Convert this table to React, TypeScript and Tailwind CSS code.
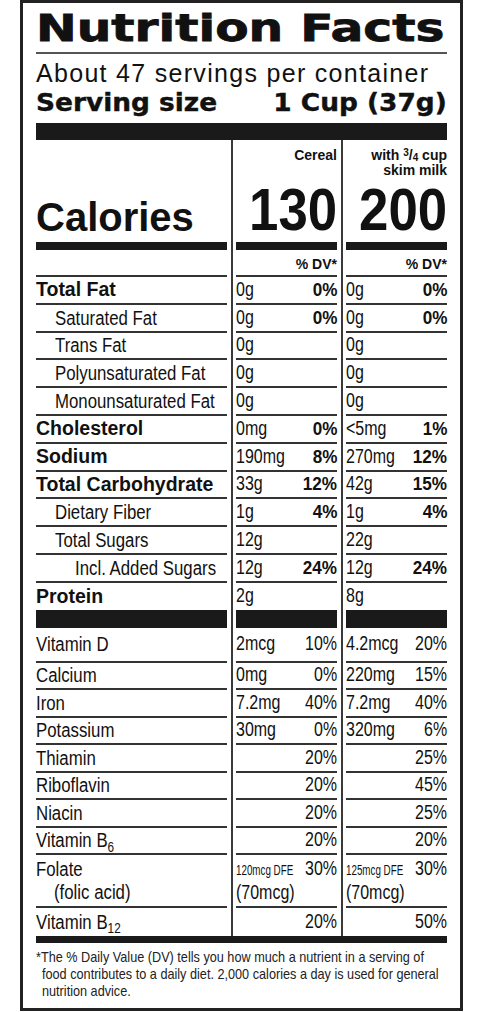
import React, { ReactNode } from "react";

const SANS = "font-['Liberation_Sans',Arial,sans-serif]";
const HEAVY = "font-['DejaVu_Sans','Liberation_Sans',sans-serif]";

function Nx({ children, right, cls }: { children: ReactNode; right?: boolean; cls: string }) {
  return (
    <span
      className={`inline-block whitespace-nowrap ${SANS} ${right ? "origin-right" : "origin-left"} ${cls}`}
    >
      {children}
    </span>
  );
}

function Cols({ h, a, b, c }: { h: string; a?: ReactNode; b?: ReactNode; c?: ReactNode }) {
  return (
    <div className={`flex ${h}`}>
      <div className="w-[195px] pr-[4px] h-full">{a}</div>
      <div className="w-[110px] border-l-2 border-[#3a3a3a] pl-[3px] pr-[4px] h-full">{b}</div>
      <div className="w-[106px] border-l-2 border-[#3a3a3a] pl-[3px] h-full">{c}</div>
    </div>
  );
}

type R = {
  label: ReactNode;
  lvl: 0 | 1 | 2;
  bold?: boolean;
  v1?: ReactNode;
  p1?: string;
  v2?: ReactNode;
  p2?: string;
  h: string;
  last?: boolean;
  pb?: boolean;
};

function NRow({ r }: { r: R }) {
  const line = r.last ? "h-full flex items-center" : "h-full border-b-2 border-[#333] flex items-center";
  const pad = r.lvl === 0 ? "" : r.lvl === 1 ? "pl-[19px]" : "pl-[39px]";
  const cell = (v?: ReactNode, p?: string) => (
    <div className={line}>
      <div className="w-[56px] shrink-0">
        <Nx cls="text-[19.5px] leading-none scale-x-[0.82]">{v}</Nx>
      </div>
      <div className="ml-auto">
        {r.pb ? (
          <Nx right cls="font-bold text-[19px] leading-none scale-x-[0.9]">{p}</Nx>
        ) : (
          <Nx right cls="text-[19.5px] leading-none scale-x-[0.82]">{p}</Nx>
        )}
      </div>
    </div>
  );
  return (
    <Cols
      h={r.h}
      a={
        <div className={`${line} ${pad}`}>
          {r.bold ? (
            <Nx cls="font-bold text-[19.5px] leading-none">{r.label}</Nx>
          ) : (
            <Nx cls="text-[20px] leading-none scale-x-[0.84]">{r.label}</Nx>
          )}
        </div>
      }
      b={cell(r.v1, r.p1)}
      c={cell(r.v2, r.p2)}
    />
  );
}

const Sub = ({ children }: { children: ReactNode }) => (
  <sub className="text-[14px] bottom-[-0.3em]">{children}</sub>
);

const top: R[] = [
  { label: "Total Fat", lvl: 0, bold: true, v1: "0g", p1: "0%", v2: "0g", p2: "0%", h: "h-[27.8px]", pb: true },
  { label: "Saturated Fat", lvl: 1, v1: "0g", p1: "0%", v2: "0g", p2: "0%", h: "h-[27.8px]", pb: true },
  { label: "Trans Fat", lvl: 1, v1: "0g", v2: "0g", h: "h-[27.8px]", pb: true },
  { label: "Polyunsaturated Fat", lvl: 1, v1: "0g", v2: "0g", h: "h-[27.8px]", pb: true },
  { label: "Monounsaturated Fat", lvl: 1, v1: "0g", v2: "0g", h: "h-[27.8px]", pb: true },
  { label: "Cholesterol", lvl: 0, bold: true, v1: "0mg", p1: "0%", v2: "<5mg", p2: "1%", h: "h-[27.8px]", pb: true },
  { label: "Sodium", lvl: 0, bold: true, v1: "190mg", p1: "8%", v2: "270mg", p2: "12%", h: "h-[27.8px]", pb: true },
  { label: "Total Carbohydrate", lvl: 0, bold: true, v1: "33g", p1: "12%", v2: "42g", p2: "15%", h: "h-[27.8px]", pb: true },
  { label: "Dietary Fiber", lvl: 1, v1: "1g", p1: "4%", v2: "1g", p2: "4%", h: "h-[27.8px]", pb: true },
  { label: "Total Sugars", lvl: 1, v1: "12g", v2: "22g", h: "h-[27.8px]", pb: true },
  { label: "Incl. Added Sugars", lvl: 2, v1: "12g", p1: "24%", v2: "12g", p2: "24%", h: "h-[27.8px]", pb: true },
  { label: "Protein", lvl: 0, bold: true, v1: "2g", v2: "8g", h: "h-[27.2px]", last: true, pb: true },
];

const vit: R[] = [
  { label: "Vitamin D", lvl: 0, v1: "2mcg", p1: "10%", v2: "4.2mcg", p2: "20%", h: "h-[34.7px]" },
  { label: "Calcium", lvl: 0, v1: "0mg", p1: "0%", v2: "220mg", p2: "15%", h: "h-[27.5px]" },
  { label: "Iron", lvl: 0, v1: "7.2mg", p1: "40%", v2: "7.2mg", p2: "40%", h: "h-[27.5px]" },
  { label: "Potassium", lvl: 0, v1: "30mg", p1: "0%", v2: "320mg", p2: "6%", h: "h-[27.5px]" },
  { label: "Thiamin", lvl: 0, p1: "20%", p2: "25%", h: "h-[27.5px]" },
  { label: "Riboflavin", lvl: 0, p1: "20%", p2: "45%", h: "h-[27.5px]" },
  { label: "Niacin", lvl: 0, p1: "20%", p2: "25%", h: "h-[27.5px]" },
  { label: <>Vitamin B<Sub>6</Sub></>, lvl: 0, p1: "20%", p2: "20%", h: "h-[27.5px]" },
];

const Bar = ({ h }: { h: string }) => <div className={`w-full ${h} bg-[#1a1a1a]`} />;

function FolateCell({ amt }: { amt: string }) {
  return (
    <div className="h-full border-b-2 border-[#333] flex flex-col justify-center">
      <div className="flex items-center h-[24px]">
        <div className="w-[56px] shrink-0">
          <Nx cls="text-[14px] leading-none scale-x-[0.7]">{amt}</Nx>
        </div>
        <div className="ml-auto">
          <Nx right cls="text-[19.5px] leading-none scale-x-[0.82]">30%</Nx>
        </div>
      </div>
      <div className="h-[22px] flex items-center">
        <Nx cls="text-[19.5px] leading-none scale-x-[0.82]">(70mcg)</Nx>
      </div>
    </div>
  );
}

export default function App() {
  return (
    <div className="w-[490px] h-[1012px] bg-white text-[#111]">
      <div className="ml-[20px] w-[443px] h-[1011px] border-[3px] border-[#222] px-[13px] box-border">
        {/* Title */}
        <div className="h-[51px] pt-[6px] border-b-2 border-[#555] box-border">
          <span className={`inline-block origin-left scale-x-[1.28] ${HEAVY} font-bold text-[38px] leading-[38px] whitespace-nowrap [-webkit-text-stroke:0.8px_#111]`}>
            Nutrition Facts
          </span>
        </div>
        <div className={`${SANS} mt-[5px] text-[25px] leading-[28px] tracking-[1.3px] whitespace-nowrap`}>
          About 47 servings per container
        </div>
        <div className={`${HEAVY} pt-[2px] flex justify-between font-bold text-[24px] leading-[28px] whitespace-nowrap [-webkit-text-stroke:0.4px_#111]`}>
          <span className="inline-block origin-left scale-x-[1.1]">Serving size</span>
          <span className="inline-block origin-right scale-x-[1.1]">1 Cup (37g)</span>
        </div>
        <div className="mt-[6px]">
          <Bar h="h-[17px]" />
        </div>

        {/* Calories block */}
        <Cols
          h="h-[102px]"
          a={
            <div className="h-full flex items-end pb-[5px]">
              <span className={`${SANS} font-bold text-[40px] leading-[40px]`}>Calories</span>
            </div>
          }
          b={
            <div className="h-full flex flex-col justify-between items-end">
              <div className={`${SANS} font-bold text-[14px] leading-[16px] pt-[7px]`}>Cereal</div>
              <Nx right cls="font-bold text-[60px] leading-[60px] pb-[2px] scale-x-[0.88]">130</Nx>
            </div>
          }
          c={
            <div className="h-full flex flex-col justify-between items-end">
              <div className={`${SANS} font-bold text-[14px] leading-[15px] pt-[8px] text-right`}>
                <div>
                  with <sup className="text-[10px] top-[-0.45em]">3</sup>/<sub className="text-[10px] bottom-[-0.1em]">4</sub> cup
                </div>
                <div>skim milk</div>
              </div>
              <Nx right cls="font-bold text-[60px] leading-[60px] pb-[2px] scale-x-[0.88]">200</Nx>
            </div>
          }
        />
        <Cols h="h-[8px]" a={<Bar h="h-[8px]" />} b={<Bar h="h-[8px]" />} c={<Bar h="h-[8px]" />} />
        <Cols
          h="h-[27px]"
          a={<div className="h-full border-b-2 border-[#333]" />}
          b={
            <div className={`h-full border-b-2 border-[#333] flex items-end justify-end pb-[4px] ${SANS} font-bold text-[14px] leading-none`}>
              % DV*
            </div>
          }
          c={
            <div className={`h-full border-b-2 border-[#333] flex items-end justify-end pb-[4px] ${SANS} font-bold text-[14px] leading-none`}>
              % DV*
            </div>
          }
        />
        {top.map((r, i) => (
          <NRow key={i} r={r} />
        ))}
        <Cols h="h-[18px]" a={<Bar h="h-[18px]" />} b={<Bar h="h-[18px]" />} c={<Bar h="h-[18px]" />} />
        {vit.map((r, i) => (
          <NRow key={i} r={r} />
        ))}
        <Cols
          h="h-[52.7px]"
          a={
            <div className="h-full border-b-2 border-[#333] flex flex-col justify-center">
              <div className="h-[24px] flex items-center">
                <Nx cls="text-[20px] leading-none scale-x-[0.84]">Folate</Nx>
              </div>
              <div className="h-[22px] flex items-center pl-[18px]">
                <Nx cls="text-[20px] leading-none scale-x-[0.84]">(folic acid)</Nx>
              </div>
            </div>
          }
          b={<FolateCell amt="120mcg DFE" />}
          c={<FolateCell amt="125mcg DFE" />}
        />
        <NRow r={{ label: <>Vitamin B<Sub>12</Sub></>, lvl: 0, p1: "20%", p2: "50%", h: "h-[28px]", last: true }} />
        <Bar h="h-[7px]" />
        <div className="pt-[5px] text-[#222] flex flex-col">
          <Nx cls="text-[15px] leading-[17px] scale-x-[0.845]">*The % Daily Value (DV) tells you how much a nutrient in a serving of</Nx>
          <Nx cls="text-[15px] leading-[17px] scale-x-[0.845] ml-[6px]">food contributes to a daily diet. 2,000 calories a day is used for general</Nx>
          <Nx cls="text-[15px] leading-[17px] scale-x-[0.845] ml-[6px]">nutrition advice.</Nx>
        </div>
      </div>
    </div>
  );
}
